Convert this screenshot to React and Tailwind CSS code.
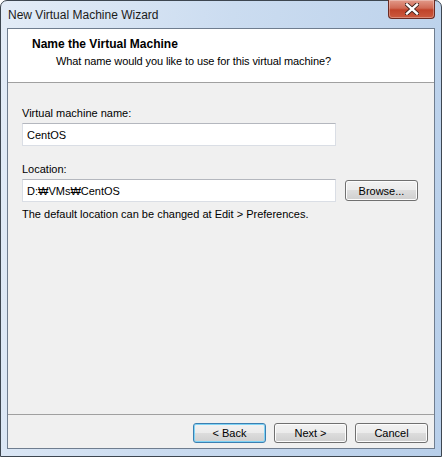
export default function App() {
  return (
    <div className="w-[442px] h-[457px] font-['Liberation_Sans',Arial,sans-serif] text-black">
      {/* Window frame */}
      <div className="w-full h-full flex flex-col rounded-t-[7px] border border-[#3d4650] bg-[linear-gradient(100deg,#e3ecf7_0%,#cbdcf0_45%,#b8cfea_100%)] px-[6px] pb-[7px]">
        {/* Title bar */}
        <div className="h-[27px] flex items-start justify-between">
          <div className="pt-[7px] pl-[1px] text-[12px] leading-[15px] text-[#1b1b1b]">
            New Virtual Machine Wizard
          </div>
          <button className="-mt-px w-[47px] h-[19px] flex items-center justify-center rounded-b-[4px] border border-t-0 border-[#6b2a22] bg-[linear-gradient(to_bottom,#e29a8a_0%,#d06a55_45%,#c0432a_55%,#cc5a3f_100%)] shadow-[inset_0_0_0_1px_rgba(255,255,255,0.3)]">
            <svg width="14" height="12" viewBox="0 0 14 12">
              <path
                d="M2 1.5 L12 10.5 M12 1.5 L2 10.5"
                stroke="#3b1f1a"
                strokeWidth="4.2"
                strokeLinecap="square"
              />
              <path
                d="M2 1.5 L12 10.5 M12 1.5 L2 10.5"
                stroke="#ffffff"
                strokeWidth="2.4"
                strokeLinecap="square"
              />
            </svg>
          </button>
        </div>

        {/* Client area */}
        <div className="flex-1 flex flex-col border border-[#6f7d8f] bg-[#f0f0f0]">
          {/* Header */}
          <div className="h-[54px] bg-white border-b border-[#a0a0a0] pt-[8px]">
            <div className="pl-[24px] text-[12px] leading-[15px] font-bold">
              Name the Virtual Machine
            </div>
            <div className="pl-[48px] mt-[2px] text-[11px] leading-[14px] tracking-[-0.1px]">
              What name would you like to use for this virtual machine?
            </div>
          </div>

          {/* Body */}
          <div className="flex-1 px-[14px] pt-[23px] text-[11px] leading-[14px]">
            <div>Virtual machine name:</div>
            <div className="mt-[3px] w-[314px] h-[23px] flex items-center pl-[4px] bg-white border border-[#dadee5] border-t-[#b4b7be]">
              CentOS
            </div>

            <div className="mt-[16px]">Location:</div>
            <div className="mt-[3px] flex items-center gap-[9px]">
              <div className="w-[314px] h-[23px] flex items-center pl-[4px] bg-white border border-[#dadee5] border-t-[#b4b7be]">
                D:₩VMs₩CentOS
              </div>
              <button className="w-[73px] h-[21px] rounded-[3px] border border-[#707070] bg-[linear-gradient(to_bottom,#f2f2f2_0%,#ebebeb_50%,#dddddd_50%,#cfcfcf_100%)] shadow-[inset_0_0_0_1px_#fcfcfc] text-[11px] leading-[14px]">
                Browse...
              </button>
            </div>
            <div className="mt-[5px]">
              The default location can be changed at Edit &gt; Preferences.
            </div>
          </div>

          {/* Footer */}
          <div className="h-[34px] border-t border-[#a0a0a0] flex items-start justify-end gap-[8px] pt-[8px] pr-[6px] text-[11px] leading-[14px]">
            <button className="w-[73px] h-[20px] rounded-[3px] border border-[#3c7fb1] bg-[linear-gradient(to_bottom,#f2f2f2_0%,#ebebeb_50%,#dddddd_50%,#cfcfcf_100%)] shadow-[inset_0_0_0_1px_#7fd3f5]">
              &lt; Back
            </button>
            <button className="w-[73px] h-[20px] rounded-[3px] border border-[#707070] bg-[linear-gradient(to_bottom,#f2f2f2_0%,#ebebeb_50%,#dddddd_50%,#cfcfcf_100%)] shadow-[inset_0_0_0_1px_#fcfcfc]">
              Next &gt;
            </button>
            <button className="w-[73px] h-[20px] rounded-[3px] border border-[#707070] bg-[linear-gradient(to_bottom,#f2f2f2_0%,#ebebeb_50%,#dddddd_50%,#cfcfcf_100%)] shadow-[inset_0_0_0_1px_#fcfcfc]">
              Cancel
            </button>
          </div>
        </div>
      </div>
    </div>
  );
}
